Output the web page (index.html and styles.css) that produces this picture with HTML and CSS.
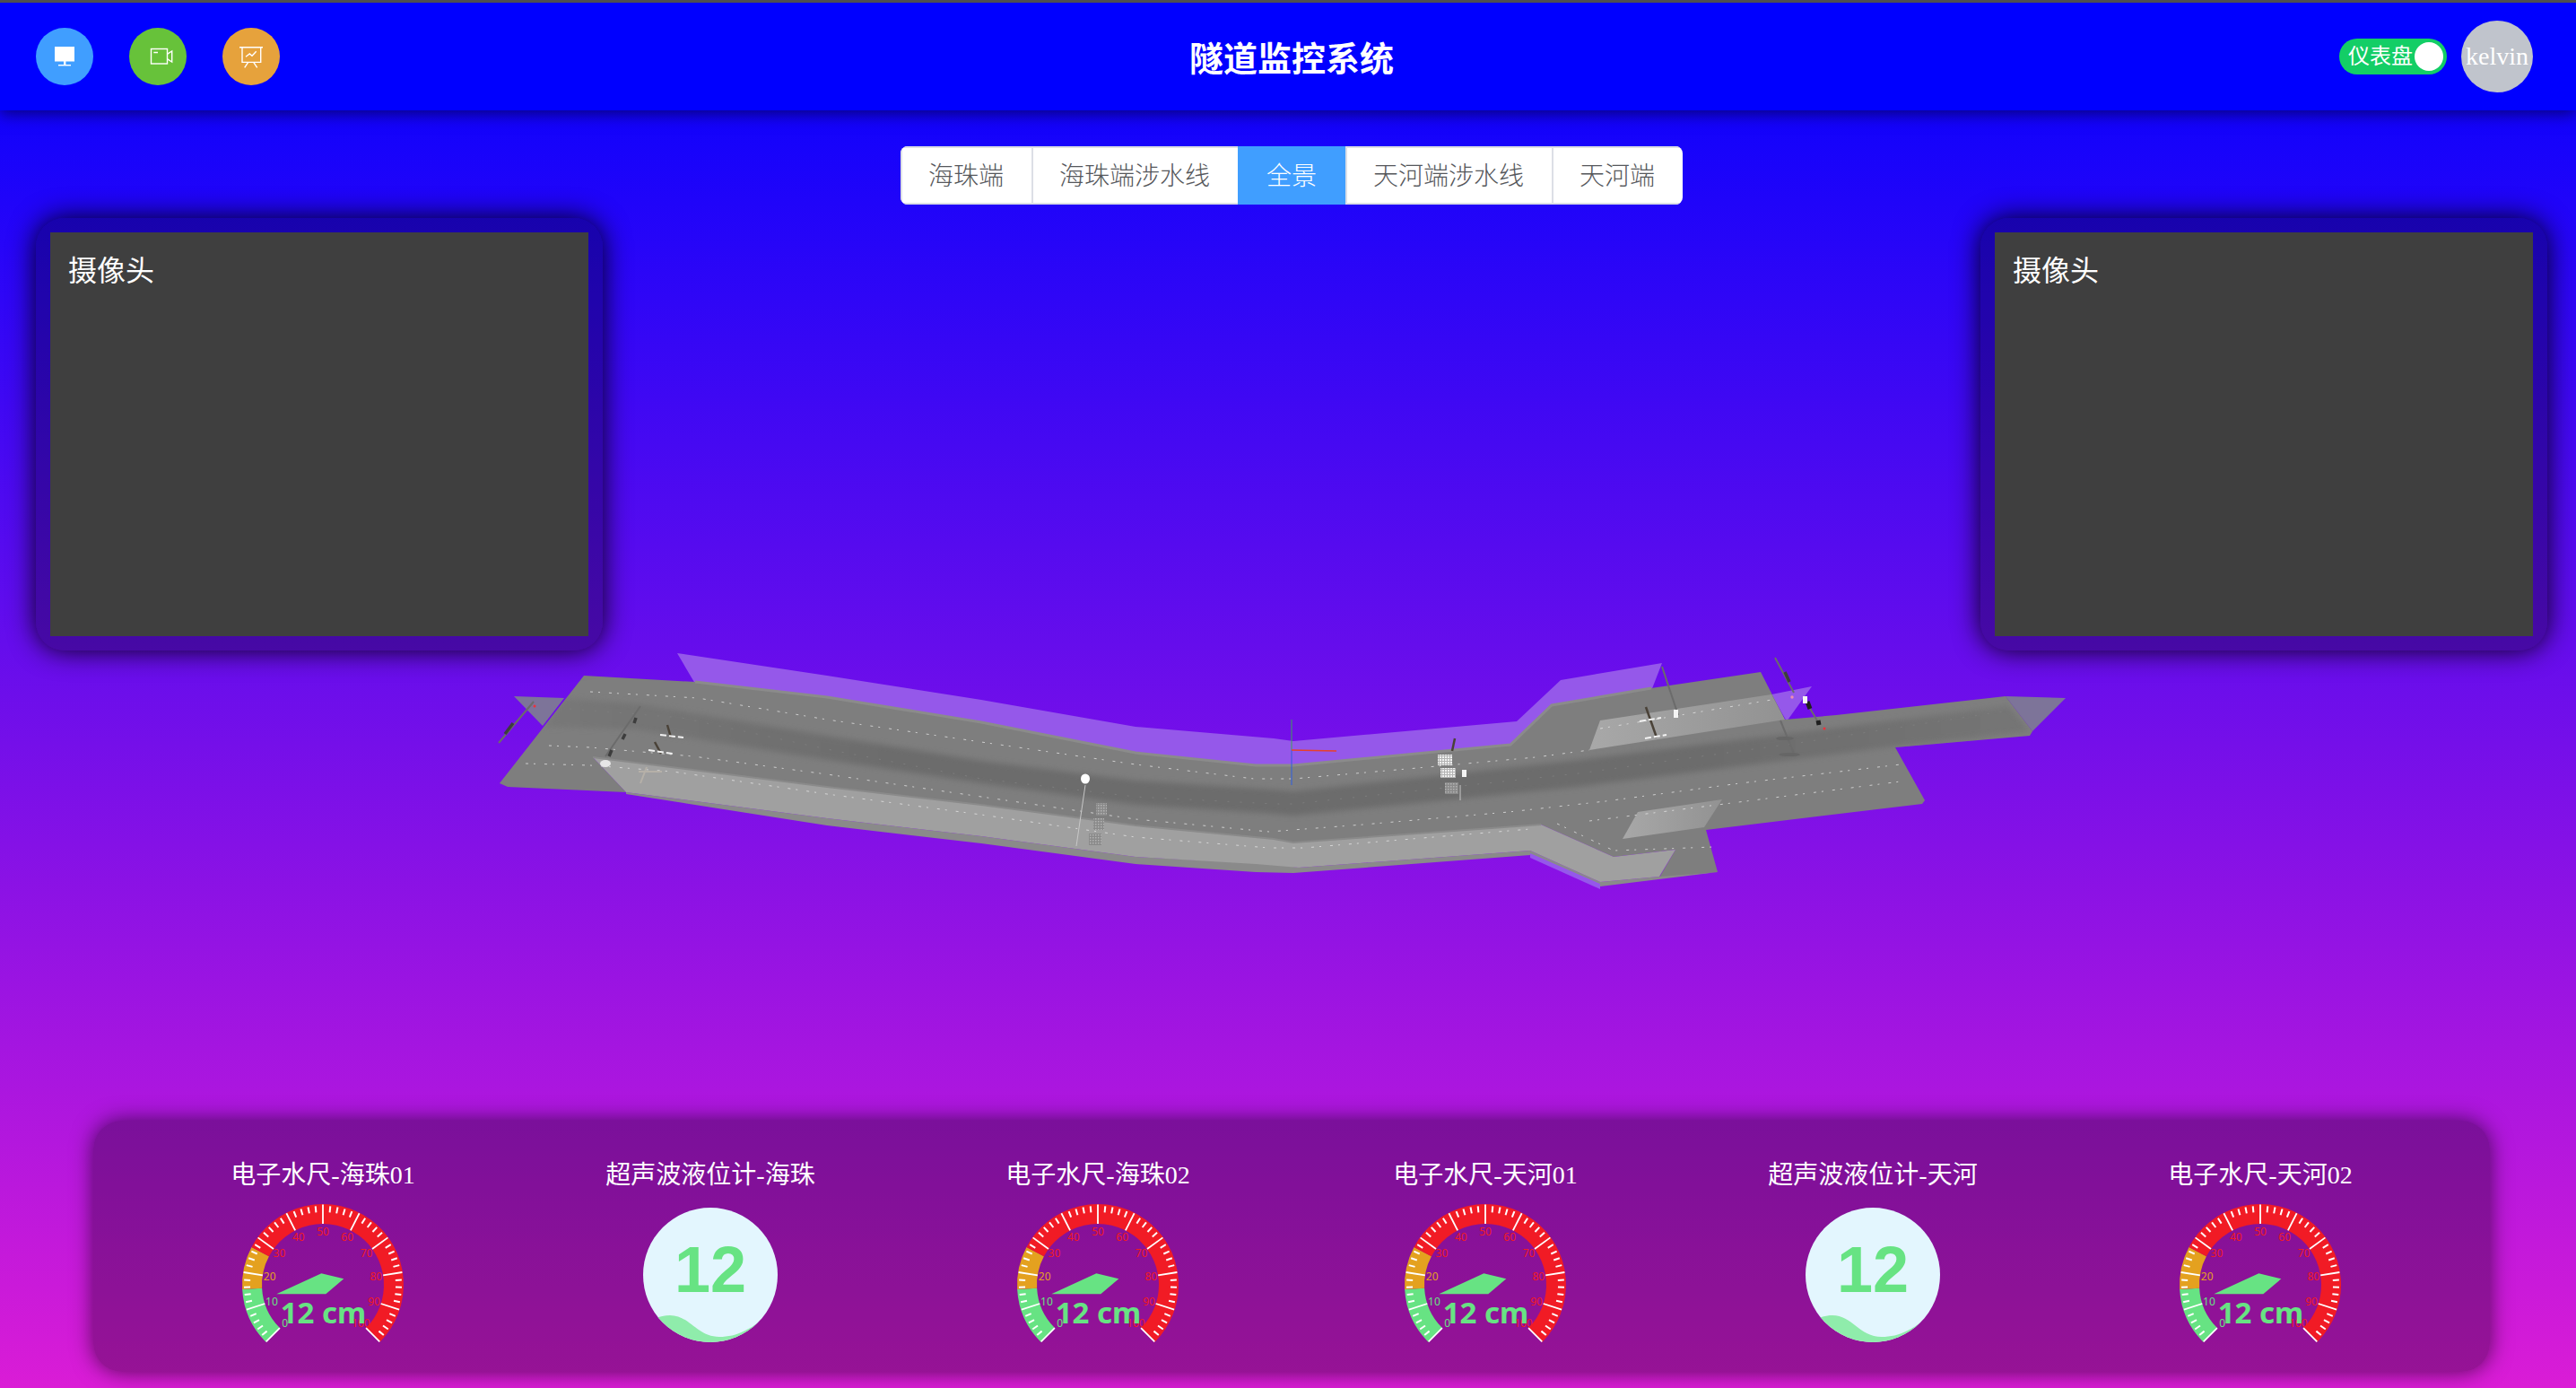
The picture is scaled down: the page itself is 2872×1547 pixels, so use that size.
FILE: index.html
```html
<!DOCTYPE html>
<html lang="zh-CN">
<head>
<meta charset="utf-8">
<title>隧道监控系统</title>
<link rel="stylesheet" href="styles.css">
</head>
<body>
<svg class="scene" viewBox="0 0 2872 1547" aria-hidden="true">
  <defs>
    <linearGradient id="bandFill" x1="600" x2="2263" y1="0" y2="0" gradientUnits="userSpaceOnUse">
      <stop offset="0" stop-color="#787878"/><stop offset=".24" stop-color="#6c6c6c"/><stop offset=".78" stop-color="#6c6c6c"/><stop offset="1" stop-color="#757575"/>
    </linearGradient>
    <linearGradient id="patchFill" x1="0" x2="1" y1="0" y2="0">
      <stop offset="0" stop-color="#a8a8a8"/><stop offset="1" stop-color="#929292"/>
    </linearGradient>
    <pattern id="speckle" width="3" height="3" patternUnits="userSpaceOnUse">
      <rect width="3" height="3" fill="#b4b4b4"/>
      <rect width="2" height="2" fill="#f0f0f0"/>
    </pattern>
    <pattern id="speckleDim" width="3" height="3" patternUnits="userSpaceOnUse">
      <rect width="3" height="3" fill="#8a8a8a"/>
      <rect width="1.5" height="1.5" fill="#b4b4b4"/>
    </pattern>
    <filter id="soft" x="-5%" y="-20%" width="110%" height="140%"><feGaussianBlur stdDeviation="3"/></filter>
    <clipPath id="roadClip">
      <polygon points="651,753 775,760 922,777 1094,805 1266,839 1400,853 1442,853 1684,830 1730,786 1841,767 1963,749 1990,802 2047,797 2236,776 2266,815 2263,820 2113,833 2146,892 2143,896 1902,925 1915,972 1850,978 1868,947 1799,955 1718,919 1442,939 1400,935 1266,920 1094,897 922,877 661,844 698,883 566,877 557,873"/>
    </clipPath>
  </defs>
  <polygon class="violet" points="755,728 922,753 1094,780 1266,810 1420,823 1442,826 1691,804 1740,758 1853,739 1841,770 1730,790 1684,834 1442,856 1420,856 1266,841 1094,807 922,779 775,762"/>
  <polygon class="violet" points="1975,774 2020,765 1992,804"/>
  <polygon class="flap" points="573,776 629,778 605,809"/>
  <polygon class="flap" points="2236,776 2303,778 2266,815"/>
  <polygon class="road" points="651,753 775,760 922,777 1094,805 1266,839 1400,853 1442,853 1684,830 1730,786 1841,767 1963,749 1990,802 2047,797 2236,776 2266,815 2263,820 2113,833 2146,892 2143,896 1902,925 1915,972 1850,978 1868,947 1799,955 1718,919 1442,939 1400,935 1266,920 1094,897 922,877 661,844 698,883 566,877 557,873"/>
  <polyline class="edge" points="775,760 922,777 1094,805 1266,839 1400,853 1442,853 1684,830 1730,786 1841,767"/>
  <g clip-path="url(#roadClip)">
    <polygon class="band" filter="url(#soft)" points="629,778 715,785 922,820 1094,848 1266,870 1420,880 1442,882 1760,847 2239,787 2263,815 2113,832 1760,877 1442,909 1420,907 1266,897 1094,873 922,847 709,813 606,810"/>
  </g>
  <polygon class="strip" points="698,883 922,912 1094,932 1266,955 1420,963 1448,967 1706,948 1784,983 1850,977 1915,972 1784,988 1706,953 1442,973 1400,972 1266,963 1094,940 922,920 698,885"/>
  <polygon class="violet" points="1706,951 1784,985 1784,991 1706,956"/>
  <polygon class="wall" points="661,844 922,877 1094,897 1266,920 1420,935 1442,939 1718,919 1799,955 1868,947 1850,977 1784,983 1706,948 1448,967 1400,963 1266,955 1094,932 922,912 698,883"/>
  <polyline class="wall-edge" points="661,844 922,877 1094,897 1266,920 1420,935 1442,939 1718,919"/>
  <polygon class="patch" points="1784,803 1975,774 1990,802 1772,836"/>
  <polygon class="patch" points="1826,905 1920,891 1900,922 1809,935"/>

  <polyline class="dash" points="658,771 778,778 922,802 1094,827 1266,852 1398,868 1442,868 1580,856 1712,844 1772,836"/>
  <polyline class="dash" points="1784,812 1975,780"/>
  <polyline class="dash" points="612,831 658,833 773,843 922,863 1094,888 1266,913 1415,927 1520,919 1682,905 1790,893 1940,873 2119,852"/>
  <polyline class="dash" points="1772,915 1915,897 2119,871"/>
  <polyline class="dash" points="586,851 658,853 750,860 922,885 1094,908 1266,933 1415,945 1454,945 1706,924"/>
  <polyline class="dash" points="1736,918 1799,948 1910,944"/>
  <polyline class="dash-faint" points="635,790 760,800 922,835 1094,868 1266,888 1420,896 1442,896 1760,862 2005,828 2239,792"/>

  <line class="pole" x1="595" y1="782" x2="556" y2="828"/>
  <line class="blob" x1="572" y1="806" x2="563" y2="818"/>
  <circle class="dot-red" cx="596" cy="787" r="1.5"/>
  <line class="pole" x1="714" y1="787" x2="675" y2="843"/>
  <line class="blob" x1="709" y1="800" x2="707" y2="806"/>
  <line class="blob" x1="697" y1="818" x2="694" y2="824"/>
  <line class="blob" x1="682" y1="836" x2="679" y2="843"/>
  <ellipse class="glow" cx="675" cy="851" rx="6" ry="4"/>
  <line class="stem" x1="744" y1="808" x2="748" y2="822"/>
  <line class="stem" x1="730" y1="827" x2="737" y2="840"/>
  <line class="white" x1="736" y1="819" x2="762" y2="822"/>
  <line class="white" x1="723" y1="836" x2="750" y2="840"/>
  <line class="pale" x1="721" y1="855" x2="714" y2="873"/>
  <line class="pale" x1="712" y1="860" x2="738" y2="860"/>
  <ellipse class="lamp" cx="1210" cy="868" rx="5" ry="5.5"/>
  <line class="thin" x1="1210" y1="875" x2="1200" y2="943"/>
  <rect class="speck" x="1222" y="895" width="12" height="14"/>
  <rect class="speck" x="1219" y="912" width="12" height="13"/>
  <rect class="speck" x="1214" y="929" width="14" height="13"/>

  <line class="stem" x1="1622" y1="823" x2="1619" y2="837"/>
  <rect class="speck-b" x="1603" y="841" width="16" height="12"/>
  <rect class="speck-b" x="1606" y="856" width="17" height="11"/>
  <rect class="spot" x="1630" y="858" width="5" height="8"/>
  <rect class="speck" x="1611" y="872" width="15" height="13"/>
  <line class="thin" x1="1628" y1="875" x2="1628" y2="892"/>
  <line class="pole" x1="1853" y1="743" x2="1871" y2="797"/>
  <rect class="spot" x="1866" y="791" width="5" height="9"/>
  <line class="stem" x1="1835" y1="788" x2="1847" y2="822"/>
  <line class="white" x1="1828" y1="804" x2="1852" y2="800"/>
  <line class="white" x1="1834" y1="823" x2="1858" y2="819"/>
  <line class="pole" x1="1979" y1="733" x2="2000" y2="772"/>
  <line class="blob" x1="1990" y1="749" x2="1995" y2="760"/>
  <circle class="dot-pink" cx="1998" cy="777" r="1.7"/>
  <line class="pole" x1="2011" y1="778" x2="2029" y2="808"/>
  <line class="blob-wide" x1="2015" y1="782" x2="2018" y2="790"/>
  <line class="blob-wide" x1="2027" y1="803" x2="2028" y2="808"/>
  <rect class="spot" x="2010" y="776" width="5" height="8"/>
  <circle class="dot-red" cx="2034" cy="812" r="1.5"/>
  <line class="pole" x1="1985" y1="803" x2="2000" y2="840"/>
  <ellipse class="base" cx="1990" cy="823" rx="10" ry="2"/>
  <ellipse class="base" cx="1995" cy="841" rx="12" ry="2"/>

  <line class="axis-g" x1="1440" y1="802" x2="1440" y2="836"/>
  <line class="axis-b" x1="1440" y1="836" x2="1440" y2="875"/>
  <line class="axis-r" x1="1440" y1="836" x2="1490" y2="837"/>
</svg>

<header class="topbar">
  <div class="nav-icons">
    <span class="nav-icon nav-blue">
      <svg viewBox="0 0 64 64" class="nav-glyph">
        <rect class="g-fill" x="21" y="21" width="22" height="16.5"/>
        <rect class="g-fill" x="31" y="37" width="2.4" height="4"/>
        <rect class="g-fill" x="25" y="41" width="14" height="1.4"/>
      </svg>
    </span>
    <span class="nav-icon nav-green">
      <svg viewBox="0 0 64 64" class="nav-glyph">
        <rect class="g-line" x="24.5" y="23.5" width="18" height="16.5"/>
        <path class="g-line" d="M27.3 27.5h4.7M42.7 29.2l5-3.2v12l-5-3.2"/>
      </svg>
    </span>
    <span class="nav-icon nav-orange">
      <svg viewBox="0 0 64 64" class="nav-glyph">
        <path class="g-line" d="M19 21.7h26M22 22v16.4h20.7V22M26 32.3l4.3-3.3 2.7 2.3 4.7-5M28.7 38.4l-4 6M34.7 38.4l4 6"/>
      </svg>
    </span>
  </div>
  <h1 class="app-title">隧道监控系统</h1>
  <div class="user-tools">
    <div class="toggle"><span class="toggle-text">仪表盘</span><span class="toggle-knob"></span></div>
    <div class="avatar">kelvin</div>
  </div>
</header>

<main class="stage">
  <nav class="seg-row">
    <div class="seg">
      <span class="seg-item">海珠端</span>
      <span class="seg-item">海珠端涉水线</span>
      <span class="seg-item seg-active">全景</span>
      <span class="seg-item">天河端涉水线</span>
      <span class="seg-item">天河端</span>
    </div>
  </nav>

  <section class="cams">
    <div class="cam"><div class="cam-view">摄像头</div></div>
    <div class="cam"><div class="cam-view">摄像头</div></div>
  </section>

  <section class="meters">
    <div class="meter"><div class="meter-title">电子水尺-海珠01</div><svg class="gauge" viewBox="0 0 200 180"></svg></div>
    <div class="meter"><div class="meter-title">超声波液位计-海珠</div>
      <div class="liquid"><svg class="wave" viewBox="0 0 150 150"><path class="wave-fill" d="M0 135C8 125 18 120 30 120C52 120 60 144 85 144C105 144 120 136 150 112V150H0Z"/></svg><span class="liquid-num">12</span></div></div>
    <div class="meter"><div class="meter-title">电子水尺-海珠02</div><svg class="gauge" viewBox="0 0 200 180"></svg></div>
    <div class="meter"><div class="meter-title">电子水尺-天河01</div><svg class="gauge" viewBox="0 0 200 180"></svg></div>
    <div class="meter"><div class="meter-title">超声波液位计-天河</div>
      <div class="liquid"><svg class="wave" viewBox="0 0 150 150"><path class="wave-fill" d="M0 135C8 125 18 120 30 120C52 120 60 144 85 144C105 144 120 136 150 112V150H0Z"/></svg><span class="liquid-num">12</span></div></div>
    <div class="meter"><div class="meter-title">电子水尺-天河02</div><svg class="gauge" viewBox="0 0 200 180"></svg></div>
  </section>
</main>
<script src="gauge.js"></script>
</body>
</html>
```

FILE: styles.css
```css
* { box-sizing: border-box; }
html, body { margin: 0; height: 100%; }
body {
  position: relative;
  height: 1547px;
  overflow: hidden;
  display: flex;
  flex-direction: column;
  background: linear-gradient(to bottom, #0000ff 0%, #da1cd6 100%);
  color: #fff;
  font-family: "Liberation Serif", "Noto Sans CJK SC", serif;
}

/* 3D canvas substitute */
.scene { position: absolute; left: 0; top: 0; width: 100%; height: 100%; }
.violet { fill: #9558ea; }
.flap { fill: #7d7499; }
.road { fill: #7e7e7e; }
.edge { fill: none; stroke: #8b8b8b; stroke-width: 3; }
.band { fill: url(#bandFill); }
.strip { fill: #8a8a8a; }
.wall { fill: #a0a0a0; }
.wall-edge { fill: none; stroke: #8a8a8a; stroke-width: 2; }
.patch { fill: url(#patchFill); }
.dash { fill: none; stroke: #e8e8e8; stroke-width: 1; stroke-dasharray: 3 6 2 10; opacity: .75; }
.dash-faint { fill: none; stroke: #7e7e7e; stroke-width: 1; stroke-dasharray: 2 12; }
.pole { stroke: #6b6b6b; stroke-width: 2; }
.blob { stroke: #3d3d3d; stroke-width: 3.5; }
.blob-wide { stroke: #1f1f1f; stroke-width: 5; }
.stem { stroke: #4a4238; stroke-width: 2.5; }
.white { stroke: #f2f2f2; stroke-width: 2; stroke-dasharray: 7 3; }
.pale { stroke: #b5b0a8; stroke-width: 2; }
.thin { stroke: #c8c8c8; stroke-width: 1; }
.glow { fill: #e6e6e6; }
.lamp { fill: #fff; }
.spot { fill: #f4f4f4; }
.speck { fill: url(#speckleDim); }
.speck-b { fill: url(#speckle); }
.dot-red { fill: #f0303a; }
.dot-pink { fill: #ef8fb0; }
.base { fill: #666; }
.axis-g { stroke: #3fa05a; stroke-width: 1; }
.axis-b { stroke: #2f5fe0; stroke-width: 1; }
.axis-r { stroke: #e8402a; stroke-width: 1.5; }

/* top bar */
.topbar {
  position: relative;
  flex: none;
  height: 123px;
  display: grid;
  grid-template-columns: 1248px 304px 1fr;
  align-items: center;
  padding: 0 48px 0 40px;
  background: #0000ff;
  border-top: 3px solid #4f4f4f;
  box-shadow: 0 4px 16px rgba(0, 0, 0, .5);
}
.nav-icons { display: flex; gap: 40px; }
.nav-icon { width: 64px; height: 64px; border-radius: 50%; display: block; }
.nav-blue { background: #409eff; }
.nav-green { background: #67c23a; }
.nav-orange { background: #e6a23c; }
.nav-glyph { display: block; width: 64px; height: 64px; }
.g-fill { fill: #fff; }
.g-line { fill: none; stroke: #fff; stroke-width: 1.4; }
.app-title {
  margin: 0;
  text-align: center;
  font: bold 38px/1 "Noto Sans CJK SC", sans-serif;
}
.user-tools { display: flex; justify-content: flex-end; align-items: center; gap: 16px; }
.toggle {
  width: 120px;
  height: 40px;
  padding: 0 4px 0 10px;
  border-radius: 20px;
  background: #13ce66;
  display: flex;
  align-items: center;
  justify-content: space-between;
}
.toggle-text { font-size: 24px; line-height: 1; }
.toggle-knob { width: 32px; height: 32px; border-radius: 50%; background: #fff; }
.avatar {
  width: 80px;
  height: 80px;
  border-radius: 50%;
  background: #c0c4cc;
  font-size: 28px;
  text-align: center;
  line-height: 80px;
}

/* stage */
.stage { position: relative; flex: 1; display: flex; flex-direction: column; }
.seg-row { display: flex; justify-content: center; padding: 40px 0 0 8px; }
.seg { display: flex; border-radius: 8px; overflow: hidden; background: #fff; }
.seg-item {
  height: 65px;
  padding: 0 31px 0 29px;
  border: 2px solid #dcdfe6;
  border-width: 2px 0 2px 2px;
  color: #55575b;
  font: 300 28px/58px "Noto Sans CJK SC", sans-serif;
}
.seg-active { padding: 0 32px 0 30px; background: #409eff; border-color: #409eff; color: #fff; }

.cams { display: flex; justify-content: space-between; padding: 15px 32px 0 40px; }
.cam {
  width: 632px;
  height: 482px;
  padding: 16px;
  border-radius: 32px;
  background: rgba(0, 0, 0, .3);
  box-shadow: 0 0 30px rgba(0, 0, 0, .9);
}
.cam-view {
  height: 450px;
  padding: 17px 20px;
  background: #3f3f3f;
  font: 32px/46px "Noto Sans CJK SC", sans-serif;
}

.meters {
  margin: auto 96px 18px 104px;
  height: 280px;
  padding: 40px 40px 0;
  display: grid;
  grid-template-columns: repeat(6, 1fr);
  border-radius: 32px;
  background: rgba(0, 0, 0, .3);
  box-shadow: 0 0 24px rgba(0, 0, 0, .6);
}
.meter { display: flex; flex-direction: column; align-items: center; }
.meter-title { font-size: 28px; line-height: 42px; height: 40px; white-space: nowrap; }
.gauge { display: block; width: 200px; height: 180px; overflow: visible; }
.g-label { font: 12px "Noto Sans", sans-serif; text-anchor: middle; dominant-baseline: central; }
.g-value { font: bold 33px "Noto Sans", sans-serif; text-anchor: middle; fill: #67e383; }
.g-pointer { fill: #67e383; }
.liquid {
  position: relative;
  width: 150px;
  height: 150px;
  margin-top: 17px;
  border-radius: 50%;
  overflow: hidden;
  background: #e3f6fe;
  display: flex;
  align-items: center;
  justify-content: center;
}
.wave { position: absolute; left: 0; top: 0; width: 150px; height: 150px; }
.wave-fill { fill: #8fecab; }
.liquid-num {
  position: relative;
  top: -6px;
  font: bold 72px/1 "Liberation Sans", sans-serif;
  color: #67e383;
}
```

FILE: gauge.js
```js
(function () {
  var CX = 100, CY = 103;
  var GREEN = '#67e383', ORANGE = '#e4a11f', RED = '#f11b25';

  function pt(t, r) {
    var a = (225 - 270 * t) * Math.PI / 180;
    return [CX + r * Math.cos(a), CY - r * Math.sin(a)];
  }
  function f(n) { return n.toFixed(2); }
  function arc(t0, t1, color) {
    var a = pt(t0, 79), b = pt(t1, 79);
    var large = (t1 - t0) * 270 > 180 ? 1 : 0;
    return '<path fill="none" stroke="' + color + '" stroke-width="22" d="M' + f(a[0]) + ' ' + f(a[1]) +
      'A79 79 0 ' + large + ' 1 ' + f(b[0]) + ' ' + f(b[1]) + '"/>';
  }
  function tick(t, r0, r1, w) {
    var a = pt(t, r0), b = pt(t, r1);
    return '<line stroke="#fff" stroke-width="' + w + '" x1="' + f(a[0]) + '" y1="' + f(a[1]) +
      '" x2="' + f(b[0]) + '" y2="' + f(b[1]) + '"/>';
  }
  function colorAt(t) { return t < 0.155 ? GREEN : t < 0.27 ? ORANGE : RED; }

  var html = arc(0, 0.155, GREEN) + arc(0.155, 0.27, ORANGE) + arc(0.27, 1, RED);
  for (var i = 0; i <= 50; i++) {
    html += i % 5 === 0 ? tick(i / 50, 68, 89.5, 1.8) : tick(i / 50, 81, 88, 2);
  }
  for (var v = 0; v <= 100; v += 10) {
    var p = pt(v / 100, 60);
    html += '<text class="g-label" fill="' + colorAt(v / 100) + '" x="' + f(p[0]) + '" y="' + f(p[1]) + '">' + v + '</text>';
  }
  html += '<polygon class="g-pointer" points="48.3,113.3 98.3,90.3 123.3,96.3 103.3,113.3"/>';
  html += '<text class="g-value" x="100.5" y="146">12 cm</text>';

  document.querySelectorAll('.gauge').forEach(function (svg) { svg.innerHTML = html; });
})();
```
